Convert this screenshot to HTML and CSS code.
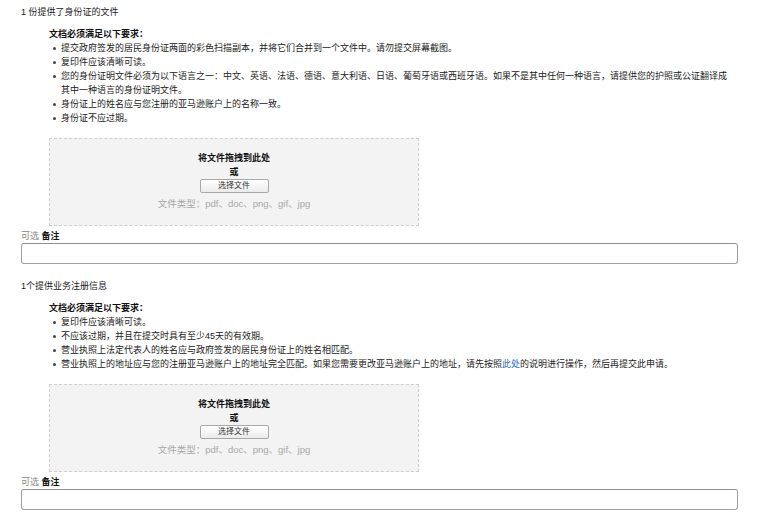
FILE: index.html
```html
<!DOCTYPE html>
<html lang="zh-CN">
<head>
  <meta charset="UTF-8" />
  <title>上传文件</title>
  <link rel="stylesheet" href="styles.css">
</head>
<body>

  <div class="page">

    <div class="section">
      <div class="section-title">1 份提供了身份证的文件</div>
      <div class="reqs">
        <div class="reqs-title">文档必须满足以下要求：</div>
        <ul class="req-list">
          <li>提交政府签发的居民身份证两面的彩色扫描副本，并将它们合并到一个文件中。请勿提交屏幕截图。</li>
          <li>复印件应该清晰可读。</li>
          <li>您的身份证明文件必须为以下语言之一：中文、英语、法语、德语、意大利语、日语、葡萄牙语或西班牙语。如果不是其中任何一种语言，请提供您的护照或公证翻译成其中一种语言的身份证明文件。</li>
          <li>身份证上的姓名应与您注册的亚马逊账户上的名称一致。</li>
          <li>身份证不应过期。</li>
        </ul>
        <div class="dropzone">
          <div class="drop-title">将文件拖拽到此处</div>
          <div class="drop-or">或</div>
          <button class="pick-btn">选择文件</button>
          <div class="drop-types">文件类型：pdf、doc、png、gif、jpg</div>
        </div>
      </div>
      <div class="note-label"><span class="optional">可选</span> <b>备注</b></div>
      <input class="note-input" type="text" />
    </div>

    <div class="section">
      <div class="section-title">1个提供业务注册信息</div>
      <div class="reqs">
        <div class="reqs-title">文档必须满足以下要求：</div>
        <ul class="req-list">
          <li>复印件应该清晰可读。</li>
          <li>不应该过期，并且在提交时具有至少45天的有效期。</li>
          <li>营业执照上法定代表人的姓名应与政府签发的居民身份证上的姓名相匹配。</li>
          <li>营业执照上的地址应与您的注册亚马逊账户上的地址完全匹配。如果您需要更改亚马逊账户上的地址，请先按照<a href="#">此处</a>的说明进行操作，然后再提交此申请。</li>
        </ul>
        <div class="dropzone">
          <div class="drop-title">将文件拖拽到此处</div>
          <div class="drop-or">或</div>
          <button class="pick-btn">选择文件</button>
          <div class="drop-types">文件类型：pdf、doc、png、gif、jpg</div>
        </div>
      </div>
      <div class="note-label"><span class="optional">可选</span> <b>备注</b></div>
      <input class="note-input" type="text" />
    </div>

  </div>

</body>
</html>
```

FILE: styles.css
```css
body {
  margin: 0;
  background: #fff;
  color: #222;
  font-family: "Liberation Sans", "Noto Sans CJK SC", sans-serif;
  font-size: 9px;
  line-height: 14px;
}

.page {
  padding: 5px 40px 10px 21px;
}

.section + .section {
  margin-top: 15px;
}

.reqs {
  padding-left: 28px;
}

.reqs-title {
  margin-top: 8px;
  font-weight: bold;
  color: #111;
}

.req-list {
  list-style: none;
  margin: 0;
  padding: 0 0 0 12px;
  width: 672px;
}

.req-list li {
  position: relative;
}

.req-list li::before {
  content: "";
  position: absolute;
  left: -8px;
  top: 6px;
  width: 3px;
  height: 3px;
  border-radius: 50%;
  background: #444;
}

.req-list a {
  color: #2a6cc0;
  text-decoration: none;
}

.dropzone {
  margin-top: 13px;
  width: 368px;
  height: 86px;
  box-sizing: content-box;
  padding: 0;
  background: #f3f3f3;
  border: 1px dashed #cfcfcf;
  display: flex;
  flex-direction: column;
  align-items: center;
}

.drop-title {
  margin-top: 12px;
  font-weight: bold;
  color: #111;
}

.drop-or {
  font-weight: bold;
  color: #111;
}

.pick-btn {
  width: 69px;
  height: 14px;
  padding: 0;
  font-family: inherit;
  font-size: 8px;
  line-height: 12px;
  color: #333;
  background: linear-gradient(#ffffff, #ebebeb);
  border: 1px solid #a8a8a8;
  border-radius: 2px;
}

.drop-types {
  margin-top: 4px;
  color: #a8a8a8;
  font-size: 9.5px;
}

.note-label {
  margin-top: 4px;
  line-height: 13px;
}

.optional {
  color: #888;
}

.note-label b {
  color: #111;
}

.note-input {
  display: block;
  box-sizing: border-box;
  width: 717px;
  height: 21px;
  margin: 0;
  border: 1px solid #a0a0a0;
  border-top-color: #909090;
  border-radius: 3px;
  background: #fff;
}
```
